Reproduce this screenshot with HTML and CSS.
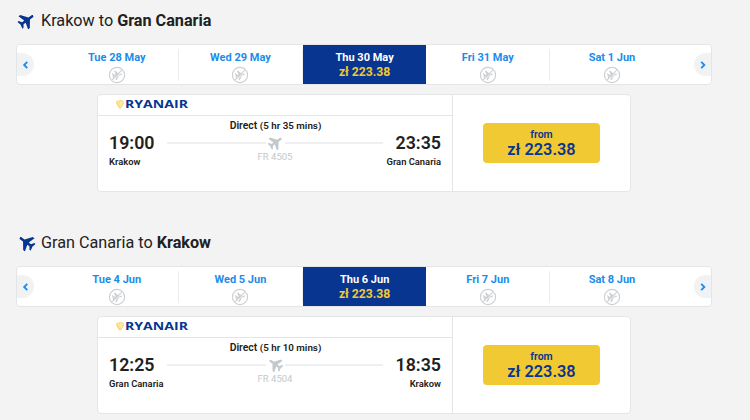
FILE: index.html
```html
<!DOCTYPE html>
<html lang="en">
<head>
  <meta charset="UTF-8">
  <title>Krakow - Gran Canaria</title>
  <link rel="stylesheet" href="styles.css">
</head>
<body>
<svg class="sprite" aria-hidden="true">
  <symbol id="plane" viewBox="0 0 24 24">
    <path d="M24 12c0-1.1-1.1-1.8-2.4-1.8h-4.9L9.4.4H6.4l2.9 9.8H5.6L2.6 6.2H.4L1.8 12 .4 17.8h2.2l3-4h3.7l-2.9 9.8h3l7.3-9.8h4.9c1.3 0 2.4-.7 2.4-1.8z"/>
  </symbol>
  <symbol id="no-flight" viewBox="0 0 18 18">
    <circle cx="9" cy="9" r="7.6" fill="none" stroke="#cdd0d3" stroke-width="1.2"/>
    <use href="#plane" x="4" y="4" width="10" height="10" fill="#cdd0d3" transform="rotate(-10 9 9)"/>
    <path d="M4.4 15 15 4.4" stroke="#fff" stroke-width="1"/>
    <path d="M3.7 14.3 14.3 3.7" stroke="#cdd0d3" stroke-width="1.1"/>
  </symbol>
  <symbol id="prev" viewBox="0 0 8 10"><path d="M5.3 1.8 2.1 5l3.2 3.2" fill="none" stroke="#1b8ceb" stroke-width="1.8"/></symbol>
  <symbol id="next" viewBox="0 0 8 10"><path d="M2.2 1.8 5.4 5 2.2 8.2" fill="none" stroke="#1b8ceb" stroke-width="1.8"/></symbol>
  <symbol id="harp" viewBox="0 0 8 9">
    <path d="M.6 1.8C2 .2 3.4 1.6 4.8.8 6 .2 7.4 1 7.3 2.6 7.1 5 5.4 6.6 4.1 8.3 2.6 6.8 1 4.4.6 1.8z" fill="#fdf3cb" stroke="#f1c933" stroke-width=".9"/>
    <path d="M1.5 2.6 4 6.8M3 2l1.8 3.4M4.8 1.8 6 3.6" stroke="#f1c933" stroke-width=".6"/>
  </symbol>
</svg>

<section class="journey">
  <h1><svg class="plane"><use href="#plane"/></svg>Krakow to&nbsp;<b>Gran Canaria</b></h1>
  <div class="dates">
    <button class="arrow"><svg><use href="#prev"/></svg></button>
    <div class="date">Tue 28 May<svg><use href="#no-flight"/></svg></div>
    <div class="date">Wed 29 May<svg><use href="#no-flight"/></svg></div>
    <div class="date selected">Thu 30 May<span>zł 223.38</span></div>
    <div class="date">Fri 31 May<svg><use href="#no-flight"/></svg></div>
    <div class="date">Sat 1 Jun<svg><use href="#no-flight"/></svg></div>
    <button class="arrow next"><svg><use href="#next"/></svg></button>
  </div>
  <div class="flight">
    <div class="details">
      <div class="brand"><svg class="harp"><use href="#harp"/></svg><svg class="wordmark"><text x="0" y="12" textLength="63" lengthAdjust="spacingAndGlyphs">RYANAIR</text></svg></div>
      <div class="duration">Direct <span>(5 hr 35 mins)</span></div>
      <div class="route">
        <div class="stop"><strong>19:00</strong>Krakow</div>
        <div class="path">
          <div class="line"><svg class="plane"><use href="#plane"/></svg></div>
          <div class="number">FR 4505</div>
        </div>
        <div class="stop arrival"><strong>23:35</strong>Gran Canaria</div>
      </div>
    </div>
    <div class="fare"><button class="price">from<strong>zł 223.38</strong></button></div>
  </div>
</section>

<section class="journey return">
  <h1><svg class="plane"><use href="#plane"/></svg>Gran Canaria to&nbsp;<b>Krakow</b></h1>
  <div class="dates">
    <button class="arrow"><svg><use href="#prev"/></svg></button>
    <div class="date">Tue 4 Jun<svg><use href="#no-flight"/></svg></div>
    <div class="date">Wed 5 Jun<svg><use href="#no-flight"/></svg></div>
    <div class="date selected">Thu 6 Jun<span>zł 223.38</span></div>
    <div class="date">Fri 7 Jun<svg><use href="#no-flight"/></svg></div>
    <div class="date">Sat 8 Jun<svg><use href="#no-flight"/></svg></div>
    <button class="arrow next"><svg><use href="#next"/></svg></button>
  </div>
  <div class="flight">
    <div class="details">
      <div class="brand"><svg class="harp"><use href="#harp"/></svg><svg class="wordmark"><text x="0" y="12" textLength="63" lengthAdjust="spacingAndGlyphs">RYANAIR</text></svg></div>
      <div class="duration">Direct <span>(5 hr 10 mins)</span></div>
      <div class="route">
        <div class="stop"><strong>12:25</strong>Gran Canaria</div>
        <div class="path">
          <div class="line"><svg class="plane"><use href="#plane"/></svg></div>
          <div class="number">FR 4504</div>
        </div>
        <div class="stop arrival"><strong>18:35</strong>Krakow</div>
      </div>
    </div>
    <div class="fare"><button class="price">from<strong>zł 223.38</strong></button></div>
  </div>
</section>
</body>
</html>
```

FILE: styles.css
```css
* {
  box-sizing: border-box;
}
body {
  margin: 0;
  background: #f3f3f3;
  color: #212121;
  font-family: Roboto, sans-serif;
}
button {
  border: 0;
  padding: 0;
  font-family: inherit;
}
svg {
  display: block;
  flex: none;
}
.sprite {
  position: absolute;
  width: 0;
  height: 0;
}
.journey {
  width: 697px;
  height: 222px;
  margin-left: 16px;
  padding-top: 7px;
}
.journey.return {
  height: 198px;
}
h1 {
  display: flex;
  align-items: center;
  height: 26px;
  margin: 0 0 11px;
  font-size: 16.2px;
  font-weight: 400;
}
b {
  font-weight: 700;
}
.plane {
  width: 17px;
  height: 17px;
  transform: rotate(-36deg);
}
.return .plane {
  transform: scaleX(-1) rotate(-36deg);
}
h1 .plane {
  margin: 1px 6px 0 2px;
  fill: #073590;
}

/* date carousel */
.dates {
  display: flex;
  align-items: center;
  width: 696px;
  height: 41px;
  border: 1px solid #e3e5e7;
  border-radius: 4px;
  background: #fff;
}
.arrow {
  display: flex;
  align-items: center;
  justify-content: center;
  width: 17px;
  height: 23px;
  border-radius: 0 12px 12px 0;
  background: #f1f2f4;
}
.arrow.next {
  margin-left: auto;
  border-radius: 12px 0 0 12px;
}
.arrow svg {
  width: 8px;
  height: 10px;
}
.date {
  display: flex;
  flex-direction: column;
  align-items: center;
  width: 123.7px;
  height: 32px;
  border-right: 1px solid #ebedef;
  color: #1b8ceb;
  font-size: 11px;
  font-weight: 700;
  line-height: 17px;
}
.arrow + .date {
  margin-left: 21.4px;
}
.date svg {
  width: 18px;
  height: 18px;
}
.date.selected {
  height: 39px;
  padding-top: 5px;
  border: 0;
  background: #073590;
  color: #fff;
  line-height: 15px;
}
.date.selected span {
  color: #f1c933;
  font-size: 12.2px;
}
.date:nth-last-child(2) {
  border: 0;
}

/* flight card */
.flight {
  display: flex;
  width: 534px;
  height: 98px;
  margin: 9px 0 0 81px;
  border: 1px solid #e3e5e7;
  border-radius: 4px;
  background: #fff;
}
.details {
  width: 355px;
  border-right: 1px solid #e3e5e7;
}
.brand {
  display: flex;
  align-items: center;
  height: 21px;
  padding-left: 18px;
  border-bottom: 1px solid #e3e5e7;
}
.harp {
  width: 8px;
  height: 9px;
  margin: 0 1px 2px 0;
}
.wordmark {
  width: 64px;
  height: 18px;
  fill: #073590;
  font: 700 11px "Open Sans", sans-serif;
}
.duration {
  height: 16px;
  padding: 3px 0 0 1px;
  text-align: center;
  font-size: 10.4px;
  font-weight: 600;
  line-height: 14px;
}
.duration span {
  font-size: 9.8px;
}
.route {
  display: flex;
  justify-content: space-between;
  padding: 0 11px;
}
.stop {
  width: 58px;
  font-size: 9.4px;
  font-weight: 600;
  line-height: 16px;
  white-space: nowrap;
}
.stop strong {
  display: block;
  height: 22px;
  font-size: 17.8px;
  font-weight: 600;
  line-height: 22px;
}
.arrival {
  text-align: right;
}
.path {
  flex: 1;
}
.line {
  display: flex;
  align-items: center;
  gap: 2px;
  height: 21px;
}
.line::before,
.line::after {
  content: "";
  flex: 1;
  height: 2px;
  background: #edeff1;
}
.line .plane {
  width: 15px;
  height: 15px;
  fill: #c3c8cd;
}
.number {
  color: #c3c8cd;
  text-align: center;
  font-size: 9.5px;
  line-height: 8px;
}
.fare {
  flex: 1;
  display: flex;
  align-items: center;
  justify-content: center;
}
.price {
  width: 117px;
  height: 40px;
  border-radius: 4px;
  background: #f1c933;
  color: #073590;
  font-size: 10.5px;
  font-weight: 600;
  line-height: 14px;
}
.price strong {
  display: block;
  font-size: 16.3px;
  font-weight: 600;
  line-height: 16px;
}
```
